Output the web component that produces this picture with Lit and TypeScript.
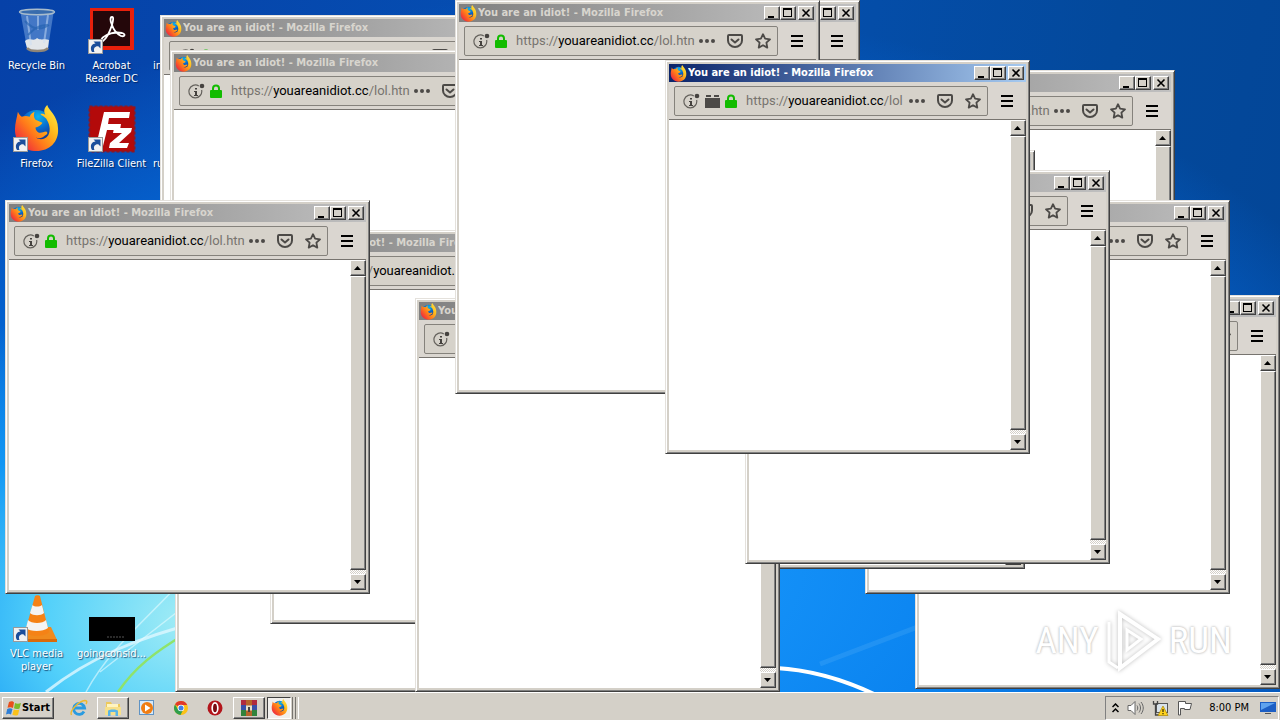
import { LitElement, html, svg, css, nothing } from "lit";
import { customElement, property } from "lit/decorators.js";
import { styleMap } from "lit/directives/style-map.js";

const firefoxIcon = (size: number) => html`<svg width=${size} height=${size} viewBox="0 0 48 48" aria-hidden="true">
  <defs>
    <radialGradient id="ffb" cx=".55" cy=".2" r=".8"><stop offset="0" stop-color="#0ab4ee"/><stop offset=".5" stop-color="#0a63c8"/><stop offset="1" stop-color="#1a2a78"/></radialGradient>
    <linearGradient id="ffo" x1="1" y1="0" x2="0.1" y2="0.8"><stop offset="0" stop-color="#fff44a"/><stop offset=".4" stop-color="#ffb91c"/><stop offset=".7" stop-color="#ff7a1a"/><stop offset="1" stop-color="#f0303c"/></linearGradient>
  </defs>
  <circle cx="24" cy="22" r="17" fill="url(#ffb)"/>
  <path fill="url(#ffo)" d="M5 7c1 2 2 4 4 5 3-1 5-1 8 0 1-3 3-4 5-5-1 3-1 6 1 8l7 3c-1 3-5 4-7 5 0 2 1 4 3 5 3 1 5-1 8-1 2 1 1 3-1 4-3 3-7 4-10 2 3 3 10 3 13-2 3-6 1-12-2-17-3-3-5-3-6-5 2 0 4 0 5 1-2-4-1-7 2-10 1 5 11 11 11 24 1 14-9 23-22 23S2 38 2 25c0-6 2-12 3-18z"/>
</svg>`;

const shortcut = svg`<g><rect x=".5" y="32.500" width="14" height="14" fill="#f2f2f2" stroke="#9a9a9a"/><path d="M4 45c-2.500-4-.5-8.500 3.500-8.500L5.500 34.500h7v7l-2.200-2.200C7 39 5 41.500 6.500 45z" fill="#1b4e9b"/></g>`;

const icons: Record<string, unknown> = {
  bin: html`<svg width="48" height="48" viewBox="0 0 48 48"><path d="M7 3h34l-6 38c-3 4-18 4-21 0z" fill="#8db8e8" fill-opacity=".45"/><path d="M12 34c5-4 9 1 12-3 4 3 8 0 12 2l-1 8c-3 4-18 4-21 0z" fill="#e2e6ea"/><path d="M14 9l4 29M25 9v14M35 8l-4 28" stroke="#c9def5" stroke-opacity=".5" stroke-width="2"/><path d="M12 14c7 8 15 10 24 4M15 28c5-5 10-10 20-10" fill="none" stroke="#1f5fae" stroke-width="2" opacity=".6"/><ellipse cx="24" cy="5" rx="17.500" ry="2.800" fill="#33659c" fill-opacity=".6" stroke="#a9bccc" stroke-width="1.400"/><path d="M14 41c3 4 18 4 21 0" fill="none" stroke="#8f8577" stroke-width="2.500"/></svg>`,
  acrobat: html`<svg width="48" height="48" viewBox="0 0 48 48"><rect x="2" y="1" width="44" height="42" fill="#e8200c"/><rect x="5" y="4" width="37" height="35" fill="#24070a"/><path d="M24 10c-2 0-2 4 0 8 2 6 5 9 9 11 4 1 5-2 1-3-5-1-12 0-17 3-4 2-5 6-2 5 3-2 7-10 9-16 1-4 2-8 0-8z" fill="none" stroke="#fff" stroke-width="1.800"/>${shortcut}</svg>`,
  firefox: html`<svg width="48" height="48" viewBox="0 0 48 48"><g>${firefoxIcon(47)}</g>${shortcut}</svg>`,
  filezilla: html`<svg width="48" height="48" viewBox="0 0 48 48"><rect x="1.500" y="1.500" width="45" height="45" fill="#b30a0a" stroke="#8f1720" stroke-width="2" stroke-dasharray="3 2"/><path d="M16 7h26l-1 6H21l-1 6h13l-1 6H19l-4 16H8zM26 23h18l-1 4-12 11h10l-2 5H21l1-5 12-10h-9z" fill="#fff"/>${shortcut}</svg>`,
  vlc: html`<svg width="48" height="48" viewBox="0 0 48 48"><path d="M12 32h26l6 13H4z" fill="#f08a1d"/><path d="M4 44h40v3H4z" fill="#d96b0b"/><path d="M22 1c1-1 4-1 5 0l9 36c-4 5-20 5-24 0z" fill="#f58216"/><path d="M19.500 10c2 2 7 2 9.500 0l2 8c-3 3-11 3-14 0zM15 25c3 4 15 4 18 0l2 8c-5 4-18 4-22 0z" fill="#f4f4f4"/>${shortcut}</svg>`,
  thumb: html`<svg width="48" height="48" viewBox="0 0 48 48"><rect x="1" y="22" width="46" height="24" fill="#000"/><path d="M19 42h17" stroke="#555" stroke-dasharray="2 1"/></svg>`,
  none: nothing,
};

@customElement("fx-window")
export class FxWindow extends LitElement {
  @property({ type: Boolean }) active = false;

  static styles = css`
    :host { display: flex; flex-direction: column; box-sizing: border-box; background: #d4d0c8; padding: 3px;
      border: 1px solid; border-color: #e4e1dc #404040 #404040 #e4e1dc;
      box-shadow: inset 1px 1px #fff, inset -1px -1px #808080;
      font: 11px/14px "DejaVu Sans Condensed", "DejaVu Sans", sans-serif; }
    svg { display: block; flex: none; }
    .title { flex: none; height: 18px; display: flex; align-items: center; gap: 1px; padding: 0 2px 0 1px;
      background: linear-gradient(90deg, #808080, #c0c0c0); color: #d8d5ce; font-weight: bold; }
    .title.active { background: linear-gradient(90deg, #0a246a, #a6caf0); color: #fff; }
    .name { flex: 1; white-space: nowrap; overflow: hidden; }
    button { padding: 0; margin: 0; box-sizing: border-box; display: grid; place-items: center; flex: none;
      background: #d4d0c8; border: 1px solid; border-color: #fff #404040 #404040 #fff;
      box-shadow: inset -1px -1px #808080; border-radius: 0; color: #000; }
    .ctl { width: 16px; height: 14px; }
    .ctls { display: flex; }
    .ctls .close { margin-left: 2px; }
    .bar { flex: none; box-sizing: border-box; height: 38px; display: flex; align-items: flex-start; gap: 13px;
      padding: 4px 13px 0 5px; border-bottom: 1px solid #77746f; background: #dad6d0; }
    .address { flex: 1; min-width: 0; box-sizing: border-box; height: 30px; display: flex; align-items: center;
      border: 1px solid #85827c; border-radius: 2px; background: #d6d2ca; padding: 0 6px 0 8px; gap: 5px; }
    .url { flex: 1; min-width: 0; overflow: hidden; white-space: nowrap; margin: 0 -4px 0 4px; color: #77746f;
      font: 13px/18px Roboto, sans-serif; }
    .url b { font-weight: normal; color: #000; }
    .acts { display: flex; gap: 12px; align-items: center; }
    .menu { width: 12px; height: 30px; border: 0; box-shadow: none; background: none; }
    .body { flex: 1; min-height: 0; display: flex; justify-content: flex-end; background: #fff; }
    .scroll { width: 16px; display: flex; flex-direction: column;
      background: repeating-conic-gradient(#fff 0 25%, #d4d0c8 0 50%) 0 0 / 2px 2px; }
    .scroll button { width: 16px; height: 16px; }
    .scroll .thumb { flex: 1; margin-bottom: 4px; }
  `;

  render() {
    return html`
      <div class="title ${this.active ? "active" : ""}">
        ${firefoxIcon(17)}
        <span class="name">You are an idiot! - Mozilla Firefox</span>
        <div class="ctls">
          <button class="ctl" aria-label="Minimize"><svg width="12" height="10"><path d="M2 8h6v2H2z"/></svg></button>
          <button class="ctl" aria-label="Maximize"><svg width="12" height="10"><path d="M1 0h9v9H1zM2 2v6h7V2z" fill-rule="evenodd"/></svg></button>
          <button class="ctl close" aria-label="Close"><svg width="12" height="10"><path d="M2.500 1.500l7 7M9.500 1.500l-7 7" stroke="#000" stroke-width="1.600"/></svg></button>
        </div>
      </div>
      <div class="bar">
        <div class="address">
          <svg width="17" height="17" viewBox="0 0 17 17"><path d="M10.800 3A6.400 6.400 0 1 0 13.600 7" fill="none" stroke="#65625d" stroke-width="1.200"/><circle cx="14" cy="3" r="2.300" fill="#45423f"/><path d="M7 5h2v1.500H7zM6 8h3v4h1v1H6v-1h1V9H6z" fill="#45423f"/></svg>
          ${this.active ? html`<svg width="15" height="13" viewBox="0 0 15 13"><path d="M0 3h15v10H0zM1 0h5v2H1zM9 0h5v2H9z" fill="#4c4a47"/></svg>` : nothing}
          <svg width="12" height="14" viewBox="0 0 12 14"><path d="M3 7V4.500a3 3 0 0 1 6 0V7" fill="none" stroke="#12bc00" stroke-width="2"/><rect y="6" width="12" height="8" rx="1" fill="#12bc00"/></svg>
          <div class="url">https://<b>youareanidiot.cc</b>/lol${this.active ? "" : ".htn"}</div>
          <div class="acts">
            <svg width="16" height="16" fill="#4c4a47"><circle cx="2" cy="8" r="2"/><circle cx="8" cy="8" r="2"/><circle cx="14" cy="8" r="2"/></svg>
            <svg width="16" height="16" fill="none" stroke="#4c4a47" stroke-width="2" stroke-linejoin="round" stroke-linecap="round"><path d="M2 2h12a1 1 0 0 1 1 1v4.500a7 6.500 0 0 1-14 0V3a1 1 0 0 1 1-1zM4.500 6.500L8 9.500l3.500-3"/></svg>
            <svg width="16" height="16" fill="none" stroke="#4c4a47" stroke-width="1.800" stroke-linejoin="round"><path d="M8 1.200l2.100 4.500 4.900.6-3.600 3.400.9 4.900L8 12.200l-4.300 2.400.9-4.900L1 6.300l4.900-.6z"/></svg>
          </div>
        </div>
        <button class="menu" aria-label="Menu"><svg width="12" height="12"><path d="M0 0h12v2H0zM0 5h12v2H0zM0 10h12v2H0z"/></svg></button>
      </div>
      <div class="body">
        <div class="scroll">
          <button aria-label="Scroll up"><svg width="8" height="4"><path d="M0 4h7L3.500 0z"/></svg></button>
          <button class="thumb" aria-label="Scroll thumb"></button>
          <button aria-label="Scroll down"><svg width="8" height="4"><path d="M0 0h7L3.500 4z"/></svg></button>
        </div>
      </div>`;
  }
}

interface Win { x: number; y: number; active?: boolean }

const windows: Win[] = [
  { x: 160, y: 15 },
  { x: 170, y: 50 },
  { x: 495, y: 0 },
  { x: 810, y: 70 },
  { x: 670, y: 150 },
  { x: 915, y: 295 },
  { x: 865, y: 200 },
  { x: 660, y: 175 },
  { x: 175, y: 298 },
  { x: 270, y: 230 },
  { x: 415, y: 298 },
  { x: 455, y: 0 },
  { x: 5, y: 200 },
  { x: 745, y: 170 },
  { x: 665, y: 60, active: true },
];

interface Item { icon: string; label: string; col: number; row: number }

const items: Item[] = [
  { icon: "bin", label: "Recycle Bin", col: 1, row: 1 },
  { icon: "acrobat", label: "Acrobat Reader DC", col: 2, row: 1 },
  { icon: "none", label: "in", col: 3, row: 1 },
  { icon: "firefox", label: "Firefox", col: 1, row: 2 },
  { icon: "filezilla", label: "FileZilla Client", col: 2, row: 2 },
  { icon: "none", label: "ru", col: 3, row: 2 },
  { icon: "vlc", label: "VLC media player", col: 1, row: 7 },
  { icon: "thumb", label: "goingconsid...", col: 2, row: 7 },
];

@customElement("app-root")
export class AppRoot extends LitElement {
  static styles = css`
    :host { display: flex; flex-direction: column; height: 100vh; overflow: hidden;
      font: 11px/13px "DejaVu Sans Condensed", "DejaVu Sans", sans-serif; }
    svg { display: block; flex: none; }
    .desktop { position: relative; flex: 1; min-height: 0; overflow: hidden;
      background:
        radial-gradient(ellipse 420px 330px at 190px 620px, #a4edf5 0, #52d0fa 35%, rgba(20, 160, 250, .8) 65%, transparent 100%),
        radial-gradient(ellipse 900px 560px at 560px 560px, #1c9dff 0, #0b84f0 45%, #0562cf 75%, transparent 100%),
        linear-gradient(100deg, #0641a8 0, #0551b4 45%, #03499c 80%, #034596 100%); }
    .rays { position: absolute; left: 0; bottom: 0; }
    .icons { position: relative; display: grid; grid-template-columns: 73px 77px 80px; grid-auto-rows: 98px; padding-top: 7px; }
    .item { display: flex; flex-direction: column; align-items: center; gap: 4px; color: #fff; text-align: center;
      text-decoration: none; text-shadow: 1px 1px 1px rgba(0, 20, 60, .7); }
    .item .pic { height: 48px; }
    .item .text { padding: 0 3px; }
    .item.edge { align-items: flex-start; }
    fx-window { position: absolute; width: 365px; height: 394px; }
    .mark { position: absolute; right: 48px; bottom: 20px; display: flex; align-items: center; gap: 6px; color: #fff;
      font: 37px/62px "Roboto Condensed", Roboto, sans-serif; text-shadow: 0 0 3px #bbb, 0 0 2px #ccc; }
    .mark svg { filter: drop-shadow(0 0 2px #bbb); }
    .taskbar { flex: none; box-sizing: border-box; height: 28px; display: flex; align-items: center; padding: 2px 1px 0 2px;
      background: #d4d0c8; border-top: 1px solid #fff; }
    .start, .task { box-sizing: border-box; height: 22px; padding: 0; display: flex; align-items: center; justify-content: center;
      background: #d4d0c8; border: 1px solid; border-color: #fff #404040 #404040 #fff; box-shadow: inset -1px -1px #808080;
      border-radius: 0; color: #000; font: inherit; }
    .start { width: 52px; font-weight: bold; margin-right: 8px; }
    .task { width: 32px; margin: 0 1px; }
    .task.plain { border-color: transparent; background: none; box-shadow: none; }
    .task.pressed { width: 24px; border-color: #404040 #fff #fff #404040; box-shadow: none; background: #f1efec; }
    .stack { width: 4px; height: 22px; box-sizing: border-box; border-right: 1px solid #fff; border-left: 1px solid #77746f; margin-right: -1px; }
    .tray { margin-left: auto; box-sizing: border-box; height: 24px; display: flex; align-items: center; gap: 8px;
      padding: 0 2px 0 6px; border: 1px solid; border-color: #808080 #fff #fff #808080; }
    .clock { margin: 0 3px 0 8px; }
  `;

  render() {
    return html`
      <main class="desktop">
        <svg class="rays" width="920" height="180" viewBox="0 0 920 180" fill="none">
          <path d="M46 180C90 145 140 125 200 110" stroke="#dff8ff" stroke-width="3" opacity=".8"/>
          <path d="M86 180C110 135 150 105 190 60M100 160L190 90" stroke="#e6fbff" stroke-width="1.500" opacity=".6"/>
          <path d="M118 180C135 155 155 140 185 122" stroke="#8fe36a" stroke-width="2.500"/>
          <path d="M776 156C810 158 845 168 876 183" stroke="#fff" stroke-width="4"/>
          <path d="M820 152L920 114" stroke="#6dbdf8" stroke-width="5" opacity=".2"/>
        </svg>
        <nav class="icons">
          ${items.map((i) => html`<a href="#" class="item ${i.icon === "none" ? "edge" : ""}"
            style=${styleMap({ gridColumn: String(i.col), gridRow: String(i.row) })}>
            <span class="pic">${icons[i.icon]}</span><span class="text">${i.label}</span></a>`)}
        </nav>
        ${windows.map((w) => html`<fx-window ?active=${w.active} style=${styleMap({ left: w.x + "px", top: w.y + "px" })}></fx-window>`)}
        <div class="mark">
          <span>ANY</span>
          <svg width="58" height="62" viewBox="0 0 58 62" fill="none" stroke="#fff" stroke-width="4"><path d="M15 4l38 25-38 29z"/><path d="M4 12v40l9 6M22 20l14 9-14 11z" stroke-width="3"/></svg>
          <span>RUN</span>
        </div>
      </main>
      <footer class="taskbar">
        <button class="start">
          <svg width="16" height="16" viewBox="0 0 16 16"><path d="M3 2c2-1 4-1 5 .5L7 8C5 6.800 3.500 7 1.500 7.800z" fill="#e8501c"/><path d="M9 3c2 1 4 .8 6 0l-1.500 5.500c-2 .8-4 .6-5.500-.2z" fill="#7cbb2a"/><path d="M1.200 9c2-.9 3.800-.8 5.300.1L5 14.500c-1.500-1-3-1-5 0z" fill="#2f7fd6"/><path d="M7.800 9.400c1.500.8 3.500 1 5.500.2L12 15c-2 .8-4 .6-5.600-.2z" fill="#fbc21a"/></svg>Start</button>
        <button class="task plain" aria-label="Internet Explorer"><svg width="18" height="18" viewBox="0 0 18 18" fill="none"><path d="M14 12.500A5.500 5.500 0 1 1 14.600 9H5" stroke="#2a9be0" stroke-width="2.800"/><path d="M1.500 16C-1 12 9 2 15 1.500c2.500 0 2 2 1 3.500" stroke="#edb92e" stroke-width="1.400"/></svg></button>
        <button class="task" aria-label="Explorer"><svg width="18" height="18" viewBox="0 0 18 18"><path d="M2 3h5l1 2h8v10H2z" fill="#edc95c"/><path d="M3 5h11v5H3z" fill="#fff4c0"/><path d="M1 8h16v8H1z" fill="#f7e08a"/><path d="M4 17v-5c0-2 10-2 10 0v5h-2.500v-4h-5v4z" fill="#58b4e6"/></svg></button>
        <button class="task plain" aria-label="Media Player"><svg width="18" height="18" viewBox="0 0 18 18"><rect x="1.500" y="1.500" width="14" height="14" fill="#d7eafa" stroke="#5f93c4"/><circle cx="9" cy="9" r="6" fill="#f07d12"/><path d="M7 5.500l5.500 3.500L7 12.500z" fill="#fff"/></svg></button>
        <button class="task plain" aria-label="Chrome"><svg width="16" height="16" viewBox="0 0 16 16"><circle cx="8" cy="8" r="7" fill="#fbc116"/><path d="M8 8L2 4.400A7 7 0 0 1 14.200 5H8z" fill="#e0392b"/><path d="M2 4.400A7 7 0 0 0 7.500 15L10 10 5 9.500z" fill="#2f9e4c"/><circle cx="8" cy="8" r="3.300" fill="#fff"/><circle cx="8" cy="8" r="2.500" fill="#3f7fe8"/></svg></button>
        <button class="task plain" aria-label="Opera"><svg width="16" height="16" viewBox="0 0 16 16"><circle cx="8" cy="8" r="7.500" fill="#b3151b"/><ellipse cx="8" cy="8" rx="2.800" ry="5.200" fill="#7a0a10" stroke="#fff" stroke-width="1.700"/></svg></button>
        <button class="task" aria-label="WinRAR"><svg width="16" height="16" viewBox="0 0 16 16"><path d="M0 0h16v5H0z" fill="#b02b3f"/><path d="M0 5h16v5H0z" fill="#3a50a8"/><path d="M0 10h16v6H0z" fill="#31833c"/><path d="M5 0h6v16H5z" fill="#b5652a"/><path d="M5 5.500h6v5H5z" fill="#e6e0c8"/><path d="M7 7h2v5H7z" fill="#444"/></svg></button>
        <button class="task pressed" aria-label="Firefox">${firefoxIcon(17)}</button>
        <span class="stack"></span><span class="stack"></span>
        <div class="tray">
          <svg width="7" height="10" fill="none" stroke="#000" stroke-width="1.500"><path d="M.5 4l3-3 3 3M.5 9l3-3 3 3"/></svg>
          <svg width="17" height="16" viewBox="0 0 17 16" fill="none" stroke="#666"><path d="M1 5.500h3l4-4v13l-4-4H1z" fill="#fff"/><path d="M10 5.500c1 1.500 1 3.500 0 5M12 3.500c2 3 2 6 0 9M14 2c3 4 3 8 0 12"/></svg>
          <svg width="17" height="16" viewBox="0 0 17 16"><rect x="4.500" y="3.500" width="11" height="9" fill="#d8e2ea" stroke="#555"/><path d="M1.500 1v3h4V1M3.500 4v11h3" fill="none" stroke="#444" stroke-width="1.300"/><path d="M11 6l5 9.500H6z" fill="#ffd21c" stroke="#a88400" stroke-width=".7"/><path d="M11 9v3M11 13v1.300" stroke="#000"/></svg>
          <svg width="16" height="16" viewBox="0 0 16 16" fill="#fff" stroke="#555"><path d="M1.500 15V1.500h7v2h6L13 9.500H7.500v-1h-4V15z"/></svg>
          <time class="clock">8:00 PM</time>
          <svg width="16" height="14" viewBox="0 0 16 14"><path d="M0 1h16v10H0z" fill="#1d5fc4"/><path d="M1 2h14L1 9z" fill="#5fa3ee"/><path d="M5 12h6v1H5z" fill="#555"/></svg>
        </div>
      </footer>`;
  }
}
